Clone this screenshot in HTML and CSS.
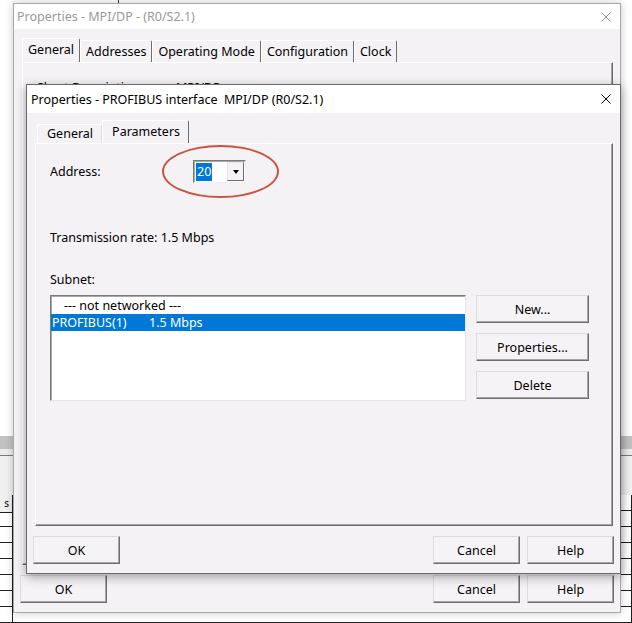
FILE: index.html
```html
<!DOCTYPE html>
<html lang="en">
  <head>
    <meta charset="UTF-8" />
    <title>Properties - PROFIBUS interface</title>
    <link rel="stylesheet" href="styles.css">
  </head>
  <body>
    <!-- Application behind the dialogs -->
    <div class="app">
      <div class="app-top"><span class="app-mark"></span></div>
      <div class="app-band"></div>
      <div class="app-strip"></div>
      <div class="app-bar"></div>
      <div class="app-grid">
        <div class="cell head">s</div><div class="cell"></div>
        <div class="cell"></div><div class="cell"></div>
        <div class="cell"></div><div class="cell"></div>
        <div class="cell"></div><div class="cell"></div>
        <div class="cell"></div><div class="cell"></div>
        <div class="cell"></div><div class="cell"></div>
        <div class="cell"></div><div class="cell"></div>
        <div class="cell"></div><div class="cell"></div>
      </div>
    </div>

    <!-- CPU interface properties (inactive) -->
    <div class="window back">
      <div class="titlebar">
        <span class="title">Properties - MPI/DP - (R0/S2.1)</span>
        <svg class="close" width="10" height="10" viewBox="0 0 10 10">
          <path d="M0.5 0.5 L9.5 9.5 M9.5 0.5 L0.5 9.5" />
        </svg>
      </div>
      <div class="win-body">
        <div class="tabs">
          <div class="tab active">General</div>
          <div class="tab">Addresses</div>
          <div class="tab">Operating Mode</div>
          <div class="tab">Configuration</div>
          <div class="tab">Clock</div>
        </div>
        <div class="panel general">
          <div class="info-row">
            <span class="info-label">Short Description:</span>
            <span>MPI/DP</span>
          </div>
        </div>
        <div class="button-row">
          <button class="btn">OK</button>
          <span class="spacer"></span>
          <button class="btn">Cancel</button>
          <button class="btn">Help</button>
        </div>
      </div>
    </div>

    <!-- PROFIBUS interface properties (active) -->
    <div class="window front">
      <div class="titlebar">
        <span class="title">Properties - PROFIBUS interface&nbsp; MPI/DP (R0/S2.1)</span>
        <svg class="close" width="10" height="10" viewBox="0 0 10 10">
          <path d="M0.5 0.5 L9.5 9.5 M9.5 0.5 L0.5 9.5" />
        </svg>
      </div>
      <div class="win-body">
        <div class="tabs">
          <div class="tab">General</div>
          <div class="tab active">Parameters</div>
        </div>
        <div class="panel params">
          <div class="field">
            <span class="field-label">Address:</span>
            <div class="combo">
              <span class="combo-value"><span class="sel">20</span></span>
              <span class="combo-arrow"><span class="caret"></span></span>
              <span class="mark"></span>
            </div>
          </div>
          <p class="rate">Transmission rate: 1.5 Mbps</p>
          <p class="subnet-label">Subnet:</p>
          <div class="subnet">
            <div class="listbox">
              <div class="item indent">--- not networked ---</div>
              <div class="item selected"><span class="net-name">PROFIBUS(1)</span>1.5 Mbps</div>
            </div>
            <div class="side-buttons">
              <button class="btn wide">New...</button>
              <button class="btn wide">Properties...</button>
              <button class="btn wide">Delete</button>
            </div>
          </div>
        </div>
        <div class="button-row">
          <button class="btn">OK</button>
          <span class="spacer"></span>
          <button class="btn">Cancel</button>
          <button class="btn">Help</button>
        </div>
      </div>
    </div>
  </body>
</html>
```

FILE: styles.css
```css
* {
  box-sizing: border-box;
}

body {
  margin: 0;
  width: 632px;
  height: 623px;
  overflow: hidden;
  position: relative;
  background: #fff;
  font-family: "Noto Sans", "Segoe UI", sans-serif;
  font-size: 12.5px;
  color: #000;
}

p {
  margin: 0;
  line-height: 17px;
}

/* Background application */
.app {
  display: flex;
  flex-direction: column;
  height: 623px;
}

.app-top {
  height: 440px;
  background: #fff;
}

.app-mark {
  display: block;
  margin-left: 118px;
  width: 1px;
  height: 4px;
  background: #333;
}

.app-band {
  height: 14px;
  background: #c2c2c2;
}

.app-strip {
  height: 6px;
  background: #ececec;
}

.app-bar {
  height: 40px;
  background: #f0f0f0;
  border-top: 1px solid #7a7a7a;
}

.app-grid {
  display: grid;
  grid-template-columns: 13px 1fr;
  grid-auto-rows: 16px;
  background: #fff;
}

.cell {
  border-bottom: 1px solid #1e1e1e;
  border-right: 1px solid #1e1e1e;
}

.cell.head {
  height: 18px;
  background: #f0f0f0;
  font-size: 10px;
  line-height: 16px;
  text-align: right;
  padding-right: 3px;
}

/* Dialog windows */
.window {
  position: absolute;
  display: flex;
  flex-direction: column;
  background: #f5f2f5;
}

.window.back {
  left: 13px;
  top: 3px;
  width: 608px;
  height: 610px;
  border: 1px solid #a8a8a8;
  box-shadow: 0 0 8px rgba(0, 0, 0, 0.22);
}

.window.front {
  left: 26px;
  top: 84px;
  width: 595px;
  height: 490px;
  border: 1px solid #6a6a6a;
  box-shadow: 0 3px 10px rgba(0, 0, 0, 0.35);
}

.titlebar {
  display: flex;
  align-items: center;
  justify-content: space-between;
  background: #fff;
  padding: 0 9px 0 3px;
  flex: none;
}

.back .titlebar {
  height: 25px;
  color: #999;
}

.front .titlebar {
  height: 28px;
  padding-left: 4px;
}

.close path {
  stroke: #000;
  stroke-width: 1;
  fill: none;
}

.back .close path {
  stroke: #999;
}

.win-body {
  flex: 1;
  display: flex;
  flex-direction: column;
  padding: 9px 7px 9px 8px;
}

.front .win-body {
  padding-top: 7px;
}

/* Tabs */
.tabs {
  display: flex;
  align-items: flex-end;
  flex: none;
}

.tab {
  height: 22px;
  line-height: 21px;
  padding: 0 5px 0 5px;
  border-top: 1px solid #fff;
  border-left: 1px solid #fff;
  border-right: 1px solid #6e6e6e;
  border-radius: 2px 2px 0 0;
}

.tab.active {
  height: 24px;
  line-height: 22px;
}

.front .tabs {
  margin-left: 2px;
}

.front .tab {
  height: 19px;
  line-height: 18px;
  padding: 0 8px 0 9px;
  border-right-color: #e0dde0;
}

.front .tab.active {
  height: 23px;
  line-height: 22px;
  border-right-color: #6e6e6e;
}

.panel {
  flex: 1;
  border: 1px solid;
  border-color: #fff #6b6b6b #6b6b6b #fff;
  box-shadow: inset -1px -1px 0 #a3a3a3;
}

.general {
  padding: 16px 0 0 14px;
}

.info-row {
  display: flex;
  line-height: 17px;
}

.info-label {
  width: 139px;
}

/* Buttons */
.button-row {
  display: flex;
  gap: 7px;
  margin: 10px -1px 0 -2px;
  flex: none;
}

.spacer {
  flex: 1;
}

.btn {
  width: 87px;
  height: 28px;
  padding: 0;
  font: inherit;
  color: #000;
  background: #f6f3f6;
  border: 1px solid;
  border-color: #dcdcdc #6e6e6e #6e6e6e #dcdcdc;
  box-shadow: inset -1px -1px 0 #a6a6a6;
}

.btn.wide {
  width: 113px;
}

/* Parameters page */
.params {
  padding: 16px 0 0 14px;
}

.field {
  display: flex;
  align-items: center;
  height: 23px;
}

.field-label {
  width: 143px;
}

.combo {
  position: relative;
  display: flex;
  width: 53px;
  height: 23px;
  padding: 1px;
  background: #fff;
  border: 1px solid;
  border-color: #7a7a7a #f0f0f0 #f0f0f0 #7a7a7a;
  box-shadow: inset 1px 1px 0 #a8a8a8;
}

.combo-value {
  flex: 1;
  padding: 1px 0 0 1px;
}

.sel {
  display: inline-block;
  background: #0078d7;
  color: #fff;
  line-height: 18px;
  padding: 0 1px;
}

.combo-arrow {
  display: flex;
  align-items: center;
  justify-content: center;
  width: 17px;
  background: #f6f3f6;
  border: 1px solid;
  border-color: #e6e6e6 #6e6e6e #6e6e6e #e6e6e6;
}

.caret {
  width: 0;
  height: 0;
  border-left: 3.5px solid transparent;
  border-right: 3.5px solid transparent;
  border-top: 4px solid #000;
}

/* Annotation ring drawn around the address field */
.mark {
  position: absolute;
  left: -32px;
  top: -16px;
  width: 117px;
  height: 53px;
  border: 2px solid #c9543e;
  border-radius: 50%;
}

.rate {
  margin-top: 46px;
}

.subnet-label {
  margin-top: 25px;
}

.subnet {
  display: flex;
  gap: 10px;
  margin-top: 7px;
}

.listbox {
  width: 416px;
  height: 106px;
  padding: 1px 0 0 0;
  background: #fff;
  border: 1px solid;
  border-color: #7a7a7a #e6e6e6 #e6e6e6 #7a7a7a;
  box-shadow: inset 1px 1px 0 #a8a8a8;
}

.item {
  height: 17px;
  line-height: 17px;
  padding-left: 1px;
  white-space: pre;
}

.item.indent {
  padding-left: 13px;
}

.item.selected {
  background: #0078d7;
  color: #fff;
}

.net-name {
  display: inline-block;
  width: 97px;
}

.side-buttons {
  display: flex;
  flex-direction: column;
  gap: 10px;
}
```
